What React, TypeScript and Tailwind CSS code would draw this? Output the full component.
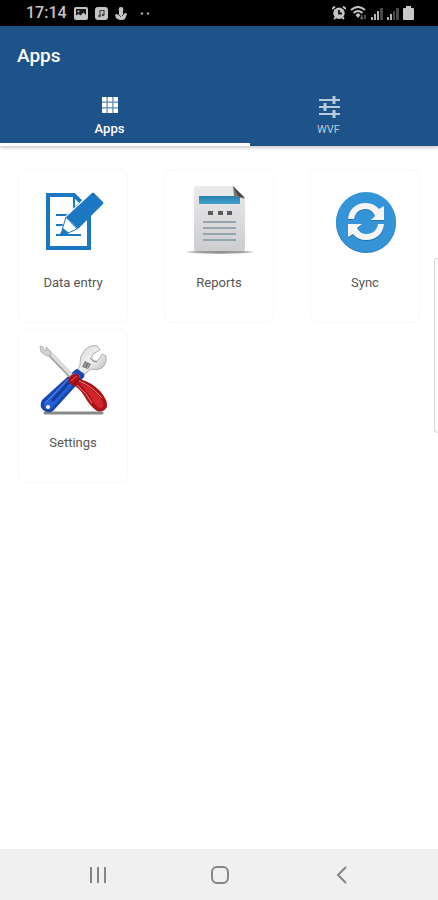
import type { ReactNode } from "react";

function StatusBar() {
  return (
    <div className="flex h-[26px] items-center justify-between bg-black pr-6 pl-[26px] text-[#c4c4c4]">
      <div className="flex items-center gap-[7px]">
        <span className="text-base font-medium leading-5">17:14</span>
        <svg width="14" height="13" viewBox="0 0 14 13" aria-hidden="true">
          <rect width="14" height="13" rx="2" fill="#c4c4c4" />
          <path d="M2 2h10v9H2z" fill="#181818" />
          <path d="M2 11V8.500l2.500-1.500 2 1.500L9.500 5.500 12 8v3z" fill="#c4c4c4" />
          <circle cx="4.500" cy="4.500" r="1" fill="#c4c4c4" />
        </svg>
        <svg width="13" height="13" viewBox="0 0 13 13" aria-hidden="true">
          <rect width="13" height="13" rx="3" fill="#c4c4c4" />
          <path d="M5 9V3.500h4v4.500" fill="none" stroke="#444" strokeWidth="1.200" />
          <circle cx="4.500" cy="9" r="1.300" fill="#444" />
          <circle cx="8" cy="8" r="1.300" fill="#444" />
        </svg>
        <svg width="12" height="13" viewBox="0 0 12 13" aria-hidden="true">
          <circle cx="6" cy="2.500" r="2.400" fill="#c4c4c4" />
          <path d="M4 4h4v3l3-1 1 1-2 5q-1 1-4 1t-5-2L0 8l1-1 3 1z" fill="#c4c4c4" />
          <path d="M4 8l2 2M9 7L7 9" stroke="#222" strokeWidth=".8" />
        </svg>
        <svg width="24" height="13" viewBox="0 0 24 13" aria-hidden="true">
          <circle cx="8" cy="6.500" r="1.200" fill="#aaa" />
          <circle cx="14" cy="6.500" r="1.200" fill="#aaa" />
        </svg>
      </div>
      <div className="flex items-center gap-1">
        <svg width="14" height="14" viewBox="0 0 14 14" aria-hidden="true">
          <path d="M0 3L3 .5M14 3L11 .5M2 13l2-2M12 13l-2-2" stroke="#c4c4c4" strokeWidth="1.800" />
          <circle cx="7" cy="7.300" r="5.700" fill="#c4c4c4" />
          <path d="M7 4v3.500h3" fill="none" stroke="#111" strokeWidth="1.800" />
        </svg>
        <svg width="17" height="14" viewBox="0 0 17 14" aria-hidden="true">
          <path d="M1 4q7-6 14 0M3.500 7q4.500-4 9 0" fill="none" stroke="#c4c4c4" strokeWidth="2" />
          <path d="M5.500 9L8 7l2.500 2L8 12z" fill="#c4c4c4" />
          <path d="M12 9v4M10.500 11.500L12 13l1-1M15 13V9" fill="none" stroke="#777" strokeWidth="1.200" />
        </svg>
        <svg width="12" height="13" viewBox="0 0 12 13" aria-hidden="true">
          <path d="M0 10h2v3H0zM3 7h2v6H3zM6 4h2v9H6z" fill="#b4b4b4" />
          <path d="M9 1h3v12H9z" fill="#484848" />
        </svg>
        <svg width="12" height="13" viewBox="0 0 12 13" aria-hidden="true">
          <path d="M0 10h2v3H0zM3 7h2v6H3z" fill="#b4b4b4" />
          <path d="M6 4h2v9H6zM9 1h3v12H9z" fill="#484848" />
        </svg>
        <svg width="11" height="14" viewBox="0 0 11 14" aria-hidden="true">
          <path d="M3 0h5v2h2q1 0 1 1v10q0 1-1 1H1q-1 0-1-1V3q0-1 1-1h2z" fill="#c8c8c8" />
        </svg>
      </div>
    </div>
  );
}

function DataEntryIcon() {
  return (
    <>
      <path d="M30 26h26l15 15v38H30z" fill="#fff" stroke="#1c78c2" strokeWidth="4" />
      <path d="M56 26v14l5-5" fill="none" stroke="#1c78c2" strokeWidth="2" />
      <path d="M38 46h18M38 56h10M38 66h25" stroke="#1c78c2" strokeWidth="2" />
      <path d="M73 24L48 48l-4 14" fill="none" stroke="#fff" strokeWidth="2" />
      <path d="M76 24l9 9q1 1 0 2L60 60 48 48l26-24q1-1 2 0z" fill="#1c78c2" />
      <path d="M48 48l11 12-11 5-4-4z" fill="#fff" stroke="#1c78c2" strokeWidth="1" />
      <path d="M45 59l6 5-10 3z" fill="#1c78c2" />
    </>
  );
}

function ReportsIcon() {
  return (
    <>
      <defs>
        <linearGradient id="paper" x1="0" y1="0" x2="0" y2="1">
          <stop offset="0" stopColor="#ebebed" />
          <stop offset="1" stopColor="#cdcdcf" />
        </linearGradient>
        <linearGradient id="banner" x1="0" y1="0" x2="0" y2="1">
          <stop offset="0" stopColor="#2580ae" />
          <stop offset="1" stopColor="#4ba3cb" />
        </linearGradient>
        <radialGradient id="ground">
          <stop offset="0" stopColor="#888" />
          <stop offset=".7" stopColor="#a4a4a4" />
          <stop offset="1" stopColor="#e4e4e4" />
        </radialGradient>
      </defs>
      <ellipse cx="56" cy="83" rx="34" ry="2" fill="url(#ground)" />
      <path d="M32 17h37l12 12v51q0 2-2 2H32q-2 0-2-2V19q0-2 2-2z" fill="url(#paper)" />
      <path d="M35 27h41v8H35z" fill="url(#banner)" />
      <path d="M69 17l1 10 11 3-5-4z" fill="#777" />
      <path d="M69 17l12 12-7-2z" fill="#444" />
      <path d="M44 42h5v4h-5zM54 42h5v4h-5zM63 42h5v4h-5z" fill="#5a5a5a" />
      <path d="M39 53h33M39 59h33M39 65h33M39 71h33" stroke="#93a6ad" strokeWidth="2" />
    </>
  );
}

function SyncIcon() {
  const arrows =
    "M38 50C39 40 46 34 56 34q8 0 13 6l5-3v14H61l4-4q-3-7-9-7c-7 0-11 4-12 10zM74 55C73 65 66 71 56 71q-8 0-13-6l-5 3V55h14l-5 4q3 6 9 6c7 0 11-4 12-10z";
  return (
    <>
      <circle cx="56" cy="54" r="30" fill="#2a78b4" />
      <circle cx="56" cy="53" r="30" fill="#3594d8" />
      <path d={arrows} fill="#2674ae" transform="translate(0 1)" />
      <path d={arrows} fill="#f5f5f5" />
    </>
  );
}

function SettingsIcon() {
  return (
    <>
      <defs>
        <linearGradient id="steel" x1="0" y1="0" x2="1" y2="1">
          <stop offset="0" stopColor="#d4d4d4" />
          <stop offset=".5" stopColor="#f2f2f2" />
          <stop offset="1" stopColor="#b4b4b4" />
        </linearGradient>
      </defs>
      <path d="M27 84h57" stroke="#888" strokeWidth="3" strokeLinecap="round" />
      <path
        d="M59 42l3-6q-1-8 4-14 6-7 13-5l3 4-7 4q-3 5 1 7 3 1 5-2l3-5 4 2q1 8-4 12-5 3-11 1l-6 5z"
        fill="url(#steel)"
        stroke="#b0b0b0"
        strokeWidth="1"
      />
      <path d="M67 32l6 3-3 5-6-2z" fill="#777" />
      <path d="M69 33l-3 5M71 35l-2 4" stroke="#bbb" strokeWidth="1" />
      <path d="M72 29q2 4 7 4" fill="none" stroke="#888" strokeWidth="1" />
      <path d="M57 41q2-2 4 0l5 4q1 1 0 3L35 82q-5 3-10-1-4-4-1-10z" fill="#1746b0" />
      <path d="M58 43l5 4-30 33q-3 2-6-1-2-3 0-6z" fill="#245fd8" />
      <path d="M52 52L35 71" stroke="#143c98" strokeWidth="3" strokeLinecap="round" />
      <path d="M56 44L27 74" stroke="#5d92ee" strokeWidth="1" />
      <circle cx="30" cy="78" r="2" fill="#fff" />
      <path d="M29 22l24 25" stroke="#a0a0a0" strokeWidth="5" />
      <path d="M29 21l24 25" stroke="#e0e0e0" strokeWidth="3" />
      <path d="M22 17l3 1 1 3 2 1v-4l3 3 2 5-4 1-6-4z" fill="#d4d4d4" stroke="#b4b4b4" strokeWidth="1" />
      <path d="M50 50q4-6 10-5l2 5q11 3 20 12 8 9 7 16-4 6-10 4-6-4-11-12-4-8-11-13-5 0-7-7z" fill="#ab1218" />
      <path d="M61 54q11 3 20 13 6 7 4 11-4 3-9-4-6-11-15-20z" fill="#d3242b" />
      <path d="M61 52q13 5 23 17M59 56q10 8 15 18" fill="none" stroke="#ee8581" strokeWidth="1" />
      <path d="M53 52l6-5" stroke="#e35a5a" strokeWidth="1" />
      <path d="M55 56l6-6" stroke="#760b10" strokeWidth="1" />
    </>
  );
}

const apps: { label: string; icon: ReactNode }[] = [
  { label: "Data entry", icon: <DataEntryIcon /> },
  { label: "Reports", icon: <ReportsIcon /> },
  { label: "Sync", icon: <SyncIcon /> },
  { label: "Settings", icon: <SettingsIcon /> },
];

export default function App() {
  return (
    <div className="relative flex min-h-screen flex-col bg-white font-['Roboto',sans-serif]">
      <StatusBar />
      <header className="bg-[#1e5389] text-white shadow-[0_2px_3px_rgba(0,0,0,0.2)]">
        <h1 className="px-[17px] py-[18px] text-[19px] font-medium leading-6">Apps</h1>
        <div role="tablist" className="grid grid-cols-2">
          <button role="tab" aria-selected="true" className="flex h-[57px] flex-col items-center pt-[11px]">
            <svg width="16" height="16" viewBox="0 0 16 16" fill="currentColor" aria-hidden="true">
              <path d="M0 0h16v16H0z" opacity=".3" />
              <path d="M0 0h4.500v4.500H0zM5.750 0h4.500v4.500h-4.500zM11.500 0H16v4.500h-4.500zM0 5.750h4.500v4.500H0zM5.750 5.750h4.500v4.500h-4.500zM11.500 5.750H16v4.500h-4.500zM0 11.500h4.500V16H0zM5.750 11.500h4.500V16h-4.500zM11.500 11.500H16V16h-4.500z" />
            </svg>
            <span className="mt-2 text-[13px] font-medium leading-4">Apps</span>
          </button>
          <button role="tab" aria-selected="false" className="flex h-[57px] flex-col items-center pt-[10px] text-[#b7cade]">
            <svg width="22" height="22" viewBox="0 0 22 22" fill="none" stroke="currentColor" strokeWidth="2" aria-hidden="true">
              <path d="M1 4h21M1 11h21M1 18h21" />
              <path d="M16 0v8M7 7v8M16 14v8" strokeWidth="3" />
            </svg>
            <span className="mt-1 text-[11px] leading-4">WVF</span>
          </button>
        </div>
        <div className="h-[3px] w-[57%] bg-white" />
      </header>

      <main className="grid flex-1 grid-cols-3 content-start justify-items-center gap-y-[6px] pt-[23px]">
        {apps.map((app) => (
          <button
            key={app.label}
            className="flex h-[154px] w-[110px] flex-col items-center rounded-lg border border-[#f8f8f8] bg-white"
          >
            <svg width="110" height="103" viewBox="0 1 110 103" aria-hidden="true" className="shrink-0">
              {app.icon}
            </svg>
            <span className="text-[13px] leading-5 text-[#555]">{app.label}</span>
          </button>
        ))}
      </main>

      <div className="absolute top-[258px] right-0 h-[175px] w-1 rounded-l-md border border-r-0 border-[#d5d5d5] bg-white" />

      <nav className="grid h-[51px] grid-cols-[1fr_auto_1fr] items-center bg-[#f0f0f0] pr-[84px] pl-[86px] text-[#858585]">
        <button aria-label="Recent apps" className="justify-self-start">
          <svg width="24" height="24" viewBox="0 0 24 24" fill="none" stroke="currentColor" strokeWidth="2">
            <path d="M5 4v16M12 4v16M19 4v16" />
          </svg>
        </button>
        <button aria-label="Home">
          <svg width="24" height="24" viewBox="0 0 24 24" fill="none" stroke="currentColor" strokeWidth="2">
            <rect x="4" y="4" width="16" height="16" rx="5" />
          </svg>
        </button>
        <button aria-label="Back" className="justify-self-end">
          <svg width="24" height="24" viewBox="0 0 24 24" fill="none" stroke="currentColor" strokeWidth="2">
            <path d="M16 4l-8 8 8 8" />
          </svg>
        </button>
      </nav>
    </div>
  );
}
